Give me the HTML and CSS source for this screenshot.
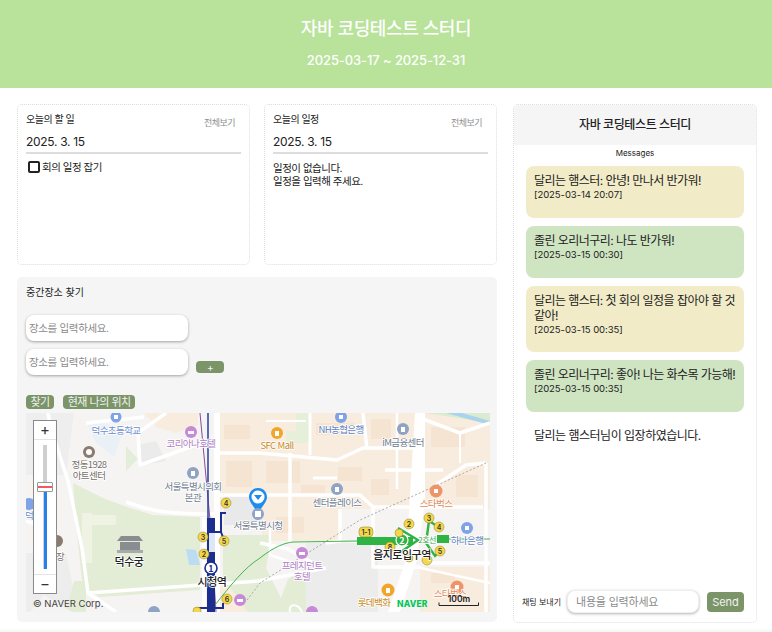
FILE: index.html
```html
<!DOCTYPE html>
<html lang="ko">
<head>
    <meta charset="UTF-8">
    <meta name="viewport" content="width=device-width, initial-scale=1.0">
    <title>자바 코딩테스트 스터디</title>
    <link rel="stylesheet" href="styles.css">
</head>
<body>
    <header class="hero">
        <h1>자바 코딩테스트 스터디</h1>
        <p>2025-03-17 ~ 2025-12-31</p>
    </header>

    <main class="content">
        <div class="left">
            <div class="cards">
                <section class="card">
                    <div class="card-head"><h2>오늘의 할 일</h2><a href="#">전체보기</a></div>
                    <div class="date">2025. 3. 15</div>
                    <label class="todo"><span class="box"></span>회의 일정 잡기</label>
                </section>
                <section class="card">
                    <div class="card-head"><h2>오늘의 일정</h2><a href="#">전체보기</a></div>
                    <div class="date">2025. 3. 15</div>
                    <p class="empty">일정이 없습니다.<br>일정을 입력해 주세요.</p>
                </section>
            </div>

            <section class="places">
                <h2>중간장소 찾기</h2>
                <div class="place-input"><input type="text" placeholder="장소를 입력하세요."></div>
                <div class="place-input">
                    <input type="text" placeholder="장소를 입력하세요.">
                    <button class="btn add">+</button>
                </div>
                <div class="place-btns">
                    <button class="btn">찾기</button>
                    <button class="btn">현재 나의 위치</button>
                </div>

                <div class="map">
                    <svg class="map-svg" width="464" height="199" viewBox="0 0 464 199" font-family="'Noto Sans CJK KR', sans-serif">
                        <rect width="464" height="199" fill="#f5f4f3"/>
                        <!-- blocks -->
                        <path d="M0 0H48L40 62H0Z" fill="#eeeeee"/>
                        <path d="M0 140H40L52 199H0Z" fill="#ededed"/>
                        <path d="M0 85H12V110H0Z" fill="#e8f0f6"/>
                        <path d="M190 0H464V96H190Z" fill="#f8ecdf"/>
                        <path d="M118 0H172V12L150 20L130 14Z" fill="#f8ecdf"/>
                        <path d="M198 82H236V112H198Z" fill="#e9e9e9"/>
                        <path d="M236 96H464V199H236Z" fill="#f5f4f2"/>
                        <path d="M236 96H314V128H236Z" fill="#f8ecdf"/>
                        <path d="M394 154H464V199H394Z" fill="#f8ecdf"/>
                        <path d="M280 130H352V199H280Z" fill="#ececec"/>
                        <path d="M190 165H234V199H190Z" fill="#f8ecdf"/>
                        <path d="M270 0H284V18H270ZM260 18H284V30H260Z" fill="#e6efd9"/>
                        <path d="M400 0H464V10Z" fill="#dcebd0"/>
                        <path d="M420 0H436L464 8V12Z" fill="#a9d4ec"/>
                        <path d="M80 10L96 22L88 44L70 30L62 12Z" fill="#e9f1f7"/>
                        <path d="M100 33L112 46L100 58Z" fill="#e3eeda"/>
                        <path d="M112 32L130 28L140 48L116 52Z" fill="#ebebeb"/>
                        <!-- building tone on the blocks -->
                        <g fill="#f6e4d2">
                            <rect x="198" y="12" width="26" height="14"/><rect x="200" y="48" width="26" height="26"/>
                            <rect x="240" y="48" width="34" height="22"/><rect x="290" y="10" width="38" height="12"/>
                            <rect x="345" y="6" width="20" height="20"/><rect x="312" y="54" width="24" height="14"/>
                            <rect x="345" y="66" width="18" height="16"/><rect x="405" y="14" width="34" height="20"/>
                            <rect x="430" y="62" width="22" height="22"/><rect x="275" y="72" width="24" height="8"/>
                            <rect x="405" y="160" width="24" height="10"/><rect x="250" y="104" width="28" height="16"/>
                        </g>
                        <!-- parks -->
                        <path d="M47 70L77 85L101 94L127 102L174 104V177L74 184L57 177L52 130Z" fill="#e3edd6"/>
                        <path d="M197 122H234V199H222L197 165Z" fill="#e3edd6"/>
                        <path d="M234 122H246L240 155L262 199H234Z" fill="#e3edd6"/>
                        <path d="M262 166L280 155V199H250Z" fill="#e3edd6"/>
                        <path d="M48 168H60V199H40Z" fill="#e3edd6"/>
                        <path d="M56 100H66V150H56ZM66 102H90V112H66Z" fill="#eef3e4"/>
                        <path d="M160 136L170 137L174 152H163Z" fill="#bcdcf1"/>
                        <!-- roads -->
                        <g fill="none" stroke="#fff" stroke-width="3.500" stroke-linejoin="round">
                            <path d="M22 0L24 12L42 68L56 135L62 180L90 199"/>
                            <path d="M62 180L175 172L232 168L300 155"/>
                            <path d="M100 89C112 92 120 100 175 101H194"/>
                            <path d="M140 0L112 20L114 52L170 32L192 28"/>
                            <path d="M60 10L118 4"/>
                            <path d="M178 104V199" stroke-width="4"/>
                            <path d="M191 0V199" stroke-width="6"/>
                            <path d="M192 40L234 40L311 47L337 35H394"/>
                            <path d="M194 82H334L347 94H457"/>
                            <path d="M264 40V130"/>
                            <path d="M284 0V42" stroke-width="3"/>
                            <path d="M337 0L341 36"/>
                            <path d="M371 0V76" stroke-width="2.500"/>
                            <path d="M359 57H417"/>
                            <path d="M287 65H311" stroke-width="3"/>
                            <path d="M240 8H280" stroke-width="2"/>
                            <path d="M397 6L434 20L464 10"/>
                            <path d="M434 20V50" stroke-width="2"/>
                            <path d="M410 72L440 52L460 50"/>
                            <path d="M460 50V199"/>
                            <path d="M347 94V154H394"/>
                            <path d="M397 150H464"/>
                            <path d="M314 96V128L300 130"/>
                            <path d="M390 154L464 170" stroke-width="2.500"/>
                            <path d="M234 130L262 136L296 155"/>
                            <path d="M0 108L12 112"/>
                            <path d="M244 110V142L262 148" stroke-width="2.500"/>
                            <path d="M264 199C262 190 272 190 276 199" stroke-width="2"/>
                        </g>
                        <path d="M389 0H399V90L390 150L374 199H362L380 146Z" fill="#fff"/>
                        <path d="M4 199L18 182L46 199Z" fill="#f5f4f3"/>
                        <!-- rail -->
                        <path d="M221 187L234 170L334 107L460 50" fill="none" stroke="#a9a9a9" stroke-dasharray="2 2"/>
                        <!-- subway 1 -->
                        <path d="M174 0L184 107L190 199" fill="none" stroke="#8a4d94" stroke-width="1"/>
                        <path d="M182 0V106" fill="none" stroke="#3348a8" stroke-width="1.600"/>
                        <path d="M181 105H189V199H181Z" fill="#1c2f8f"/>
                        <path d="M183 120H189V139H183Z" fill="#dfe6f5"/>
                        <path d="M189 119H195V100H200M195 119L198 127" fill="none" stroke="#1c2f8f" stroke-width="2"/>
                        <path d="M172 199V195H181M189 195H197V190" fill="none" stroke="#1c2f8f" stroke-width="2"/>
                        <path d="M177 122H181M178 140H181" fill="none" stroke="#1c2f8f" stroke-width="2"/>
                        <!-- line 2 -->
                        <path d="M189 192C205 172 218 155 234 145C248 134 258 130 267 129L331 128M423 126H464" fill="none" stroke="#43b551" stroke-width="1"/>
                        <path d="M331 124H387V132H331ZM411 122H423V130H411Z" fill="#2fb344"/>
                        <path d="M372 115L392 127L372 141" fill="none" stroke="#2fb344" stroke-width="2.400"/>
                        <path d="M403 108L400 130L409 143L414 138M403 108L411 113" fill="none" stroke="#2fb344" stroke-width="2.400"/>
                        <circle cx="376" cy="127" r="6" fill="#2fb344" stroke="#fff" stroke-width="1.200"/>
                        <text x="376" y="130.500" font-size="9" font-weight="700" fill="#fff" text-anchor="middle">2</text>
                        <circle cx="185" cy="155" r="6" fill="#fff" stroke="#1c2f8f" stroke-width="1.600"/>
                        <text x="185" y="158.500" font-size="9" font-weight="700" fill="#1c2f8f" text-anchor="middle">1</text>
                        <!-- exits -->
                        <g fill="#f4d84a" stroke="#8a7a2a" stroke-width=".5">
                            <circle cx="200" cy="90" r="5"/>
                            <circle cx="177" cy="124" r="5"/>
                            <circle cx="198" cy="128" r="5"/>
                            <circle cx="178" cy="141" r="5"/>
                            <circle cx="201" cy="186" r="5"/>
                            <circle cx="171" cy="198" r="4"/>
                            <circle cx="383" cy="111" r="5"/>
                            <circle cx="373" cy="120" r="4"/>
                            <circle cx="364" cy="134" r="5"/>
                            <circle cx="403" cy="105" r="5"/>
                            <circle cx="413" cy="114" r="5"/>
                            <circle cx="414" cy="138" r="5"/>
                            <circle cx="401" cy="147" r="5"/>
                            <circle cx="383" cy="145" r="4"/>
                            <rect x="333" y="114" width="14" height="10" rx="4"/>
                        </g>
                        <g font-size="7" fill="#333" text-anchor="middle" font-family="Inter, sans-serif" font-weight="600">
                            <text x="200" y="92.500">4</text>
                            <text x="177" y="126.500">3</text>
                            <text x="198" y="130.500">5</text>
                            <text x="178" y="143.500">2</text>
                            <text x="201" y="188.500">6</text>
                            <text x="383" y="113.500">2</text>
                            <text x="364" y="136.500">8</text>
                            <text x="403" y="107.500">3</text>
                            <text x="413" y="116.500">4</text>
                            <text x="414" y="140.500">5</text>
                            <text x="340" y="121.500">1-1</text>
                        </g>
                        <!-- poi dots -->
                        <g>
                            <circle cx="90" cy="4" r="5.500" fill="#7fa3e6"/>
                            <circle cx="165" cy="19" r="6" fill="#c68ad6"/>
                            <circle cx="63" cy="39" r="6" fill="#8a7b6e"/>
                            <circle cx="167" cy="60" r="6" fill="#8fa3c4"/>
                            <circle cx="251" cy="20" r="6" fill="#f2a52b"/>
                            <circle cx="315" cy="4" r="6" fill="#7fa3e6"/>
                            <circle cx="377" cy="16" r="6" fill="#8fa3c4"/>
                            <circle cx="311" cy="76" r="6" fill="#8fa3c4"/>
                            <circle cx="410" cy="78" r="6.500" fill="#ee9468"/>
                            <circle cx="441" cy="115" r="6" fill="#7fa3e6"/>
                            <circle cx="276" cy="140" r="6" fill="#c68ad6"/>
                            <circle cx="362" cy="177" r="6.500" fill="#f2a52b"/>
                            <circle cx="431" cy="174" r="6.500" fill="#ee9468"/>
                            <circle cx="128" cy="199" r="6" fill="#8fa3c4"/>
                            <circle cx="286" cy="199" r="6" fill="#c68ad6"/>
                            <circle cx="3" cy="91" r="6" fill="#7fa3e6"/>
                            <circle cx="214" cy="187" r="6" fill="#c68ad6"/>
                            <circle cx="31" cy="128" r="6" fill="#8a7b6e"/>
                        </g>
                        <g fill="#fff">
                            <rect x="88" y="2" width="4" height="4"/>
                            <rect x="162" y="18" width="6" height="3"/>
                            <circle cx="63" cy="39" r="3"/>
                            <rect x="165" y="58" width="4" height="5"/>
                            <rect x="249" y="18" width="4" height="5"/>
                            <rect x="313" y="2" width="4" height="4"/>
                            <rect x="375" y="14" width="4" height="5"/>
                            <rect x="309" y="74" width="4" height="5"/>
                            <rect x="408" y="76" width="4" height="4"/>
                            <rect x="439" y="113" width="4" height="4"/>
                            <rect x="273" y="139" width="6" height="3"/>
                            <rect x="360" y="175" width="4" height="5"/>
                            <rect x="429" y="172" width="4" height="4"/>
                            <rect x="211" y="186" width="6" height="3"/>
                        </g>
                        <!-- palace -->
                        <path d="M91 128L95 123H113L117 128ZM94 129H114V137H94Z" fill="#8a8d90"/>
                        <path d="M91 137H117V140H91Z" fill="#a8aaac"/>
                        <!-- labels -->
                        <g class="map-label" font-size="9.500" letter-spacing="-.6" text-anchor="middle">
                            <text x="90" y="21" fill="#6e8fcf">덕수초등학교</text>
                            <text x="165" y="34" fill="#b07fc4">코리아나호텔</text>
                            <text x="63" y="55" fill="#77706a">정동1928</text>
                            <text x="63" y="66" fill="#77706a">아트센터</text>
                            <text x="167" y="77" fill="#6f7c8f">서울특별시의회</text>
                            <text x="167" y="88" fill="#6f7c8f">본관</text>
                            <text x="232" y="116" fill="#6f7c8f">서울특별시청</text>
                            <text x="251" y="36" fill="#c88a22">SFC Mall</text>
                            <text x="315" y="20" fill="#5f7fbf">NH농협은행</text>
                            <text x="377" y="33" fill="#6f7c8f">iM금융센터</text>
                            <text x="311" y="93" fill="#6f7c8f">센터플레이스</text>
                            <text x="410" y="94" fill="#e08a58">스타벅스</text>
                            <text x="441" y="131" fill="#5f7fbf">하나은행</text>
                            <text x="276" y="156" fill="#b07fc4">프레지던트</text>
                            <text x="276" y="167" fill="#b07fc4">호텔</text>
                            <text x="348" y="193" fill="#c88a22">롯데백화</text>
                            <text x="424" y="184" fill="#e08a58">스타벅스</text>
                            <text x="26" y="147" fill="#77706a">동극장</text>
                            <text x="3" y="106" fill="#6e8fcf">덕</text>
                            <text x="401" y="130" fill="#3ea64f" font-size="8">2호선</text>
                        </g>
                        <g class="map-label" font-weight="500" letter-spacing="-.5" text-anchor="middle" fill="#222" font-size="11">
                            <text x="103" y="153">덕수궁</text>
                            <text x="186" y="173">시청역</text>
                            <text x="376" y="146">을지로입구역</text>
                        </g>
                        <!-- marker -->
                        <path d="M232 75C225 75 223 81 223 84C223 89 229 95 232 100C235 95 241 89 241 84C241 81 239 75 232 75Z" fill="#1c8cf0"/>
                        <circle cx="232" cy="84" r="6.500" fill="#fff"/>
                        <path d="M228 82H236L232 87Z" fill="#1c8cf0"/>
                        <circle cx="232" cy="101" r="6" fill="#8fa3c4"/>
                        <rect x="229" y="98" width="6" height="6" fill="#fff"/>
                        <!-- footer -->
                        <text x="7" y="194" font-size="9.500" fill="#444" font-family="Inter, sans-serif">© NAVER Corp.</text>
                        <text x="371" y="193.500" font-size="8.500" font-weight="800" fill="#03c75a" font-family="Inter, sans-serif" letter-spacing=".2">NAVER</text>
                        <text x="433" y="189" font-size="8.500" font-weight="600" fill="#222" text-anchor="middle" font-family="Inter, sans-serif">100m</text>
                        <path d="M413 189.500V192.500H452.500V189.500" fill="none" stroke="#222"/>
                    </svg>

                    <div class="zoom">
                        <div class="zoom-btn">+</div>
                        <div class="zoom-track">
                            <div class="zoom-rail"></div>
                            <div class="zoom-fill"></div>
                            <div class="zoom-handle"></div>
                        </div>
                        <div class="zoom-btn">−</div>
                    </div>
                </div>
            </section>
        </div>

        <aside class="chat">
            <h2 class="chat-title">자바 코딩테스트 스터디</h2>
            <div class="chat-label">Messages</div>
            <div class="messages">
                <div class="msg yellow">달리는 햄스터: 안녕! 만나서 반가워!<small>[2025-03-14 20:07]</small></div>
                <div class="msg green">졸린 오리너구리: 나도 반가워!<small>[2025-03-15 00:30]</small></div>
                <div class="msg yellow">달리는 햄스터: 첫 회의 일정을 잡아야 할 것 같아!<small>[2025-03-15 00:35]</small></div>
                <div class="msg green">졸린 오리너구리: 좋아! 나는 화수목 가능해!<small>[2025-03-15 00:35]</small></div>
                <div class="notice">달리는 햄스터님이 입장하였습니다.</div>
            </div>
            <div class="send">
                <label for="chatInput">채팅 보내기</label>
                <input type="text" id="chatInput" placeholder="내용을 입력하세요">
                <button class="btn send-btn">Send</button>
            </div>
        </aside>
    </main>
</body>
</html>
```

FILE: styles.css
```css
* {
    box-sizing: border-box;
}
html {
    height: 100%;
    background-color: #f4f4f4;
}
body {
    margin: 0;
    width: 772px;
    height: 632px;
    overflow: hidden;
    background: linear-gradient(#fff 628px, #f4f4f4 632px);
    font-family: Inter, "Noto Sans CJK KR", sans-serif;
    color: #222;
}
h1, h2, p {
    margin: 0;
}
.hero {
    height: 88px;
    padding-top: 15px;
    background-color: #b9e29b;
    color: #fff;
    text-align: center;
}
.hero h1 {
    font-size: 18px;
    line-height: 28px;
    font-weight: 500;
    letter-spacing: -0.4px;
}
.hero p {
    margin-top: 7px;
    font-size: 13px;
    line-height: 20px;
    font-weight: 500;
    letter-spacing: -0.1px;
}
.content {
    display: flex;
    gap: 16px;
    padding: 16px 15px 0 17px;
}
.left {
    width: 480px;
}
.cards {
    display: flex;
    gap: 14px;
}
.card {
    width: 233px;
    height: 161px;
    padding: 8px;
    border: 1px dotted #ddd;
    border-radius: 5px;
    background-color: #fff;
    letter-spacing: -0.5px;
}
.card-head {
    display: flex;
    justify-content: space-between;
    height: 20px;
}
.card-head h2 {
    font-size: 10px;
    line-height: 12px;
    font-weight: 400;
}
.card-head a {
    margin: 4px 6px 0 0;
    font-size: 9px;
    line-height: 11px;
    color: #8e8e8e;
    text-decoration: none;
}
.date {
    height: 21px;
    padding-top: 1px;
    border-bottom: 2px solid #ddd;
    font-size: 12px;
    line-height: 16px;
    letter-spacing: -0.3px;
}
.todo {
    display: flex;
    align-items: center;
    gap: 2px;
    margin: 7px 0 0 2px;
    font-size: 10.500px;
    line-height: 14px;
}
.box {
    width: 12px;
    height: 12px;
    margin-top: -2px;
    border: 2px solid #222;
    border-radius: 2px;
    background-color: #fff;
}
.empty {
    margin-top: 8px;
    font-size: 10.500px;
    line-height: 13px;
}
.places {
    position: relative;
    height: 345px;
    margin-top: 12px;
    padding: 9px;
    border-radius: 5px;
    background-color: #f5f5f5;
}
.places h2 {
    font-size: 10px;
    line-height: 12px;
    font-weight: 400;
    margin-bottom: 17px;
}
.place-input {
    display: flex;
    align-items: flex-end;
    gap: 8px;
    margin-bottom: 8px;
}
.place-input input {
    width: 162px;
    height: 26px;
    padding: 0 3px;
    border: none;
    border-radius: 8px;
    background-color: #fff;
    box-shadow: 0 1px 3px rgba(0, 0, 0, 0.35);
    font-family: inherit;
    font-size: 10.500px;
    letter-spacing: -0.35px;
    outline: none;
}
.place-input input::placeholder {
    color: #8a8a8a;
}
.btn {
    padding: 0 4.500px;
    height: 14px;
    border: none;
    border-radius: 4px;
    background-color: #7b9569;
    color: #f2f2f2;
    font-family: inherit;
    font-size: 11px;
    line-height: 14px;
    letter-spacing: -0.5px;
}
.add {
    width: 28px;
    height: 12px;
    margin-bottom: 2px;
    font-size: 10px;
    line-height: 12px;
}
.place-btns {
    display: flex;
    gap: 9px;
    margin-top: 20px;
}
.map {
    position: relative;
    width: 464px;
    height: 199px;
    margin-top: 4px;
    overflow: hidden;
}
.map-svg {
    display: block;
}
.map-label text {
    paint-order: stroke;
    stroke: #fff;
    stroke-width: 1.5px;
}
.zoom {
    position: absolute;
    left: 7px;
    top: 7px;
    width: 24px;
    height: 174px;
    border: 1px solid #8a8a8a;
    background-color: #fff;
}
.zoom-btn {
    height: 18px;
    text-align: center;
    font-size: 15px;
    line-height: 18px;
    color: #333;
}
.zoom-track {
    position: relative;
    height: 136px;
    border-top: 1px solid #e4e4e4;
    border-bottom: 1px solid #e4e4e4;
}
.zoom-rail {
    position: absolute;
    left: 9px;
    top: 5px;
    width: 4px;
    height: 124px;
    background-color: #cfcfcf;
}
.zoom-fill {
    position: absolute;
    left: 10px;
    top: 52px;
    width: 3px;
    height: 77px;
    background-color: #2a7fe8;
}
.zoom-handle {
    position: absolute;
    left: 3px;
    top: 42px;
    width: 16px;
    height: 10px;
    border: 1px solid #999;
    border-radius: 1px;
    background: linear-gradient(#fff 3px, #f05a5a 3px, #f05a5a 5px, #fff 5px);
}
.chat {
    display: flex;
    flex-direction: column;
    width: 244px;
    height: 519px;
    border: 1px dotted #ddd;
    border-radius: 5px;
    background-color: #fff;
}
.chat-title {
    height: 40px;
    background-color: #f5f5f5;
    border-radius: 5px 5px 0 0;
    text-align: center;
    font-size: 12px;
    line-height: 40px;
    font-weight: 500;
    letter-spacing: -0.4px;
}
.chat-label {
    margin-top: 2px;
    text-align: center;
    font-size: 8px;
    line-height: 12px;
}
.messages {
    flex: 1;
    padding: 7px 12px 0;
}
.msg {
    margin-bottom: 8px;
    padding: 7px 8px 16px;
    min-height: 52px;
    border-radius: 8px;
    font-size: 12px;
    line-height: 15px;
    letter-spacing: -0.55px;
}
.msg small {
    display: block;
    font-size: 9.500px;
    line-height: 13px;
    margin-top: 0;
    letter-spacing: -0.05px;
}
.yellow {
    background-color: #f1ebc7;
}
.green {
    background-color: #cfe4c1;
}
.notice {
    padding: 8px 8px 0;
    font-size: 12px;
    line-height: 15px;
    letter-spacing: -0.5px;
}
.send {
    display: flex;
    align-items: center;
    height: 33px;
    margin-bottom: 4px;
    padding-left: 8px;
}
.send label {
    width: 45px;
    font-size: 8px;
    white-space: nowrap;
}
.send input {
    width: 132px;
    height: 23px;
    padding: 0 8px;
    border: 1px solid #eee;
    border-radius: 8px;
    box-shadow: 0 1px 3px rgba(0, 0, 0, 0.3);
    font-family: inherit;
    font-size: 11px;
    letter-spacing: -0.2px;
    outline: none;
}
.send input::placeholder {
    color: #8a8a8a;
}
.send-btn {
    width: 37px;
    height: 20px;
    margin-left: 8px;
    padding: 0;
    font-size: 11px;
    line-height: 20px;
    letter-spacing: 0;
}
```
